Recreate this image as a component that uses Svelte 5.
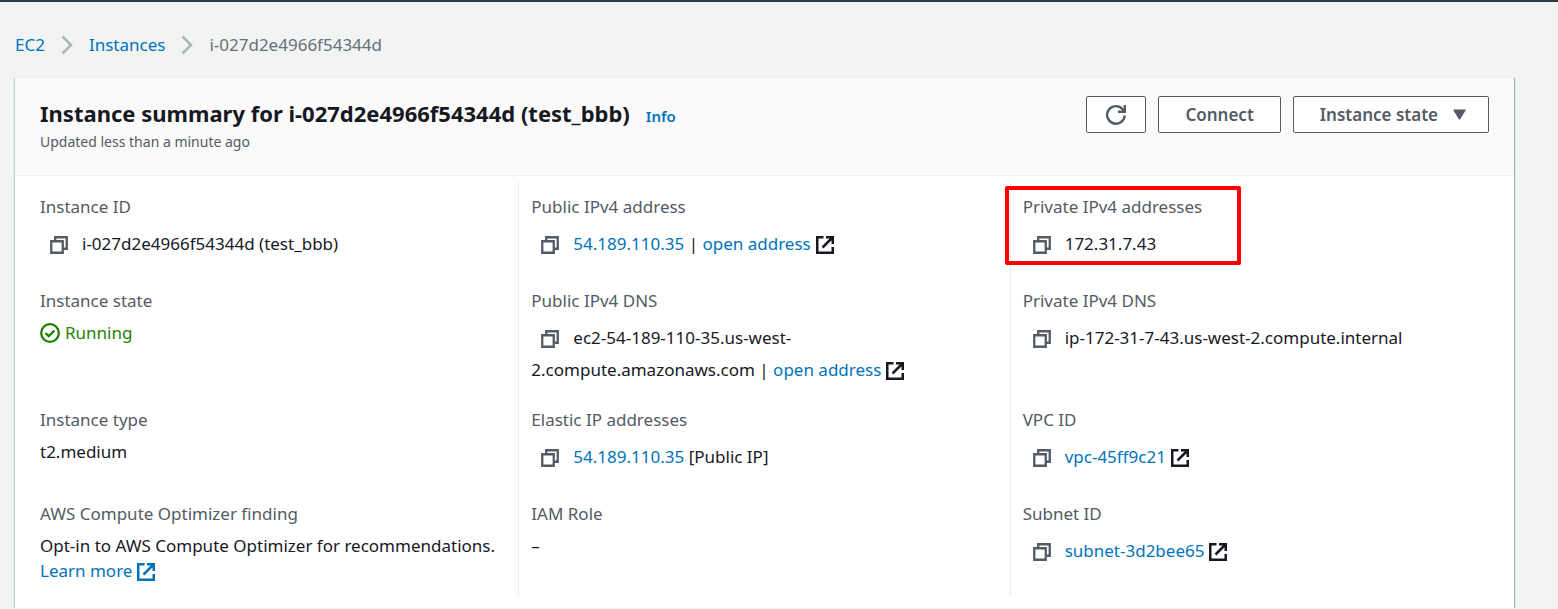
<script>
  const fields = [
    { label: 'Instance ID', copy: true, parts: [{ text: 'i-027d2e4966f54344d (test_bbb)' }] },
    {
      label: 'Public IPv4 address',
      copy: true,
      parts: [{ link: '54.189.110.35' }, { text: ' | ' }, { link: 'open address' }],
      external: true
    },
    { label: 'Private IPv4 addresses', copy: true, marked: true, parts: [{ text: '172.31.7.43' }] },
    { label: 'Instance state', status: 'Running' },
    {
      label: 'Public IPv4 DNS',
      copy: true,
      parts: [
        { text: 'ec2-54-189-110-35.us-west-' },
        { text: '2.compute.amazonaws.com | ' },
        { link: 'open address' }
      ],
      external: true
    },
    {
      label: 'Private IPv4 DNS',
      copy: true,
      parts: [{ text: 'ip-172-31-7-43.us-west-2.compute.internal' }]
    },
    { label: 'Instance type', parts: [{ text: 't2.medium' }] },
    {
      label: 'Elastic IP addresses',
      copy: true,
      parts: [{ link: '54.189.110.35' }, { text: ' [Public IP]' }]
    },
    { label: 'VPC ID', copy: true, parts: [{ link: 'vpc-45ff9c21' }], external: true },
    {
      label: 'AWS Compute Optimizer finding',
      parts: [{ text: 'Opt-in to AWS Compute Optimizer for recommendations.' }],
      more: 'Learn more'
    },
    { label: 'IAM Role', parts: [{ text: '–' }] },
    { label: 'Subnet ID', copy: true, parts: [{ link: 'subnet-3d2bee65' }], external: true }
  ];
</script>

{#snippet chevron()}
  <svg class="chevron" width="12" height="20" viewBox="0 0 12 20" aria-hidden="true">
    <path d="M1.5 1.5 10 10l-8.500 8.500" fill="none" stroke="#aab7b8" stroke-width="2.500" />
  </svg>
{/snippet}

{#snippet externalIcon()}
  <svg class="external" width="18" height="18" viewBox="0 0 18 18" aria-hidden="true">
    <path d="M7.500 1.250H1.250v15.500h15.500V11M10 1.250h6.750V8M16.500 1.500 6.500 11.500" fill="none" stroke="currentColor" stroke-width="2.500" />
  </svg>
{/snippet}

<div class="page">
  <nav aria-label="Breadcrumbs">
    <a href="#ec2">EC2</a>
    {@render chevron()}
    <a href="#instances">Instances</a>
    {@render chevron()}
    <span>i-027d2e4966f54344d</span>
  </nav>

  <main class="card">
    <header>
      <div class="heading">
        <div class="title-line">
          <h1>Instance summary for i-027d2e4966f54344d (test_bbb)</h1>
          <a class="info" href="#info">Info</a>
        </div>
        <p>Updated less than a minute ago</p>
      </div>
      <div class="actions">
        <button class="refresh" aria-label="Refresh">
          <svg width="22" height="22" viewBox="0 0 22 22" aria-hidden="true">
            <path d="M19.700 11.500A8.800 8.800 0 1 1 17.600 5.200L19 6.800" fill="none" stroke="currentColor" stroke-width="2.400" />
            <path d="M19.800 1v6.800H13" fill="none" stroke="currentColor" stroke-width="2.400" />
          </svg>
        </button>
        <button>Connect</button>
        <button class="menu">
          Instance state
          <svg width="13" height="11" viewBox="0 0 13 11" aria-hidden="true">
            <path d="M1 .5h11q1 0 .5 1L7.300 10q-.8 1-1.600 0L.5 1.500Q0 .5 1 .5Z" fill="currentColor" />
          </svg>
        </button>
      </div>
    </header>

    <dl>
      {#each fields as field}
        <div class="field" class:marked={field.marked}>
          <dt>{field.label}</dt>
          <dd>
            {#if field.copy}<button class="copy" aria-label={`Copy ${field.label}`}>
                <svg width="18" height="18" viewBox="0 0 18 18" aria-hidden="true">
                  <path d="M1.250 5.250h11.500v11.500H1.250ZM5.200 5V1.250h11.550v11.500H13" fill="none" stroke="currentColor" stroke-width="2.300" />
                </svg>
              </button>{/if}{#if field.status}<span class="status"
                ><svg width="20" height="20" viewBox="0 0 20 20" aria-hidden="true">
                  <circle cx="10" cy="10" r="8.800" fill="none" stroke="currentColor" stroke-width="2.300" />
                  <path d="m5.500 10 3.200 3.100 5.800-5.600" fill="none" stroke="currentColor" stroke-width="2.400" />
                </svg>{field.status}</span
              >{/if}{#each field.parts ?? [] as part}{#if part.link}<a href="#details">{part.link}</a
                >{:else}{part.text}{/if}{/each}{#if field.external}{@render externalIcon()}{/if}
            {#if field.more}
              <a class="more" href="#learn">{field.more}{@render externalIcon()}</a>
            {/if}
          </dd>
        </div>
      {/each}
    </dl>
  </main>
</div>

<style>
  :global(body) {
    margin: 0;
    background: #f2f4f4;
  }

  .page {
    border-top: 2px solid #2d394a;
    padding: 30px 44px 0 15px;
    color: #16191f;
    font: 17px/25px 'Noto Sans', 'Open Sans', sans-serif;
  }

  a {
    color: #0073bb;
    text-decoration: none;
  }

  nav {
    display: flex;
    align-items: center;
    gap: 16px;
    margin-bottom: 20px;
    color: #687078;
  }

  .card {
    border-top: 1px solid #eaeded;
    background: #fff;
    box-shadow:
      0 1px 0 #879596,
      1px 1px 1px #a5b0b2,
      -1px 1px 1px #c5cccd;
  }

  header {
    display: flex;
    justify-content: space-between;
    align-items: flex-start;
    padding: 18px 25px 24px;
    border-bottom: 1px solid #eaeded;
    background: #fafafa;
  }

  .title-line {
    display: flex;
    align-items: baseline;
    gap: 16px;
  }

  h1 {
    margin: 0;
    font-size: 22px;
    line-height: 34px;
    font-weight: 700;
  }

  .info {
    font-size: 15px;
    font-weight: 600;
  }

  p {
    margin: 2px 0 0;
    color: #545b64;
    font-size: 14px;
    line-height: 19px;
  }

  .actions {
    display: flex;
    gap: 12px;
  }

  button {
    border: 0;
    background: none;
    padding: 0;
    color: #545b64;
    font: inherit;
    cursor: pointer;
  }

  .actions button {
    display: flex;
    align-items: center;
    justify-content: center;
    height: 37px;
    padding: 0 26px;
    border: 1px solid #545b64;
    border-radius: 2px;
    background: #fff;
    font-weight: 600;
  }

  .actions .refresh {
    padding: 0 18px;
  }

  .actions .menu {
    gap: 15px;
    padding-right: 22px;
  }

  dl {
    display: grid;
    grid-template-columns: repeat(3, 1fr);
    margin: 0;
    padding: 6px 13px 12px 12px;
  }

  .field {
    position: relative;
    padding: 12px 13px 13px;
  }

  .field:not(:nth-child(3n + 1)) {
    padding-left: 12px;
    border-left: 1px solid #eaeded;
  }

  .marked::after {
    content: '';
    position: absolute;
    top: 4px;
    left: -6px;
    width: 228px;
    height: 71px;
    border: 4px solid #fe0000;
    border-radius: 2px;
    pointer-events: none;
  }

  dt {
    color: #545b64;
    margin-bottom: 7px;
  }

  dd {
    margin: 0;
  }

  .copy {
    display: inline-flex;
    align-items: center;
    width: 42px;
    height: 37px;
    padding-left: 10px;
    box-sizing: border-box;
    vertical-align: -4px;
  }

  .external {
    margin-left: 5px;
    vertical-align: -4px;
  }

  .status {
    display: flex;
    align-items: center;
    gap: 5px;
    color: #1d8102;
  }

  .more {
    display: block;
  }
</style>
